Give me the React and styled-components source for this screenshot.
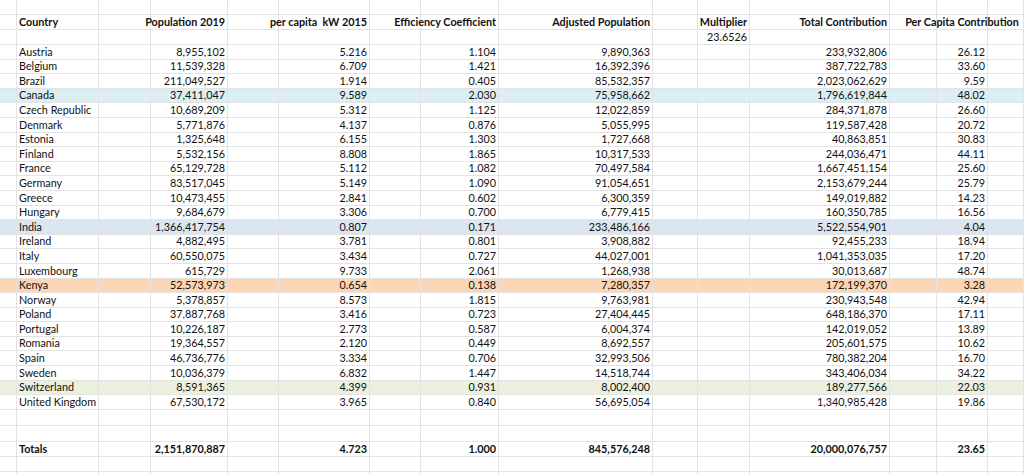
import React from "react";
import styled, { createGlobalStyle } from "styled-components";

const Global = createGlobalStyle`
  html, body { margin: 0; padding: 0; background: #fff; }
  body { font-family: Lato, "Open Sans", sans-serif; color: #111; }
`;

const COLS = "17px 82px 52px 77px 51px 91px 51px 78px 154px 45px 52px 140px 47px 51px 36px";

const Sheet = styled.div`
  display: grid;
  grid-template-columns: ${COLS};
  width: 1024px;
  height: 474px;
  overflow: hidden;
`;

const Row = styled.div`
  display: contents;
`;

const Cell = styled.div`
  height: ${(p) => p.$h || 14.6}px;
  box-sizing: border-box;
  border-right: 1px solid #e3e3e3;
  border-bottom: 1px solid #e3e3e3;
  background: ${(p) => p.$bg || "#fff"};
  font-size: 10.8px;
  line-height: 15px;
  font-weight: ${(p) => (p.$bold ? 700 : 400)};
  padding: 0 2px;
  white-space: pre;
  position: relative;
  display: flex;
  align-items: flex-end;
  justify-content: ${(p) => (p.$align === "right" ? "flex-end" : p.$align === "center" ? "center" : "flex-start")};
  z-index: ${(p) => (p.$over ? 1 : 0)};
`;

const data = [
  ["Austria", "8,955,102", "5.216", "1.104", "9,890,363", "233,932,806", "26.12"],
  ["Belgium", "11,539,328", "6.709", "1.421", "16,392,396", "387,722,783", "33.60"],
  ["Brazil", "211,049,527", "1.914", "0.405", "85,532,357", "2,023,062,629", "9.59"],
  ["Canada", "37,411,047", "9.589", "2.030", "75,958,662", "1,796,619,844", "48.02", "#daeef3"],
  ["Czech Republic", "10,689,209", "5.312", "1.125", "12,022,859", "284,371,878", "26.60"],
  ["Denmark", "5,771,876", "4.137", "0.876", "5,055,995", "119,587,428", "20.72"],
  ["Estonia", "1,325,648", "6.155", "1.303", "1,727,668", "40,863,851", "30.83"],
  ["Finland", "5,532,156", "8.808", "1.865", "10,317,533", "244,036,471", "44.11"],
  ["France", "65,129,728", "5.112", "1.082", "70,497,584", "1,667,451,154", "25.60"],
  ["Germany", "83,517,045", "5.149", "1.090", "91,054,651", "2,153,679,244", "25.79"],
  ["Greece", "10,473,455", "2.841", "0.602", "6,300,359", "149,019,882", "14.23"],
  ["Hungary", "9,684,679", "3.306", "0.700", "6,779,415", "160,350,785", "16.56"],
  ["India", "1,366,417,754", "0.807", "0.171", "233,486,166", "5,522,554,901", "4.04", "#dce6f1"],
  ["Ireland", "4,882,495", "3.781", "0.801", "3,908,882", "92,455,233", "18.94"],
  ["Italy", "60,550,075", "3.434", "0.727", "44,027,001", "1,041,353,035", "17.20"],
  ["Luxembourg", "615,729", "9.733", "2.061", "1,268,938", "30,013,687", "48.74"],
  ["Kenya", "52,573,973", "0.654", "0.138", "7,280,357", "172,199,370", "3.28", "#fcd5b4"],
  ["Norway", "5,378,857", "8.573", "1.815", "9,763,981", "230,943,548", "42.94"],
  ["Poland", "37,887,768", "3.416", "0.723", "27,404,445", "648,186,370", "17.11"],
  ["Portugal", "10,226,187", "2.773", "0.587", "6,004,374", "142,019,052", "13.89"],
  ["Romania", "19,364,557", "2.120", "0.449", "8,692,557", "205,601,575", "10.62"],
  ["Spain", "46,736,776", "3.334", "0.706", "32,993,506", "780,382,204", "16.70"],
  ["Sweden", "10,036,379", "6.832", "1.447", "14,518,744", "343,406,034", "34.22"],
  ["Switzerland", "8,591,365", "4.399", "0.931", "8,002,400", "189,277,566", "22.03", "#ebf1de"],
  ["United Kingdom", "67,530,172", "3.965", "0.840", "56,695,054", "1,340,985,428", "19.86"],
];

function makeRow(vals, opts = {}) {
  const cells = Array(15).fill(null).map(() => ({ text: "", align: "left" }));
  Object.entries(vals).forEach(([k, v]) => {
    cells[k] = v;
  });
  return { cells, ...opts };
}

const R = (t) => ({ text: t, align: "right" });
const L = (t) => ({ text: t, align: "left" });

const rows = [];
rows.push(makeRow({}, { h: 15 }));
rows.push(
  makeRow(
    {
      1: L("Country"),
      3: R("Population 2019"),
      5: R("per capita  kW 2015"),
      7: R("Efficiency Coefficient"),
      8: R("Adjusted Population"),
      10: R("Multiplier"),
      11: R("Total Contribution"),
      13: { text: "Per Capita Contribution", align: "center" },
    },
    { bold: true, h: 15 }
  )
);
rows.push(makeRow({ 10: R("23.6526") }, { h: 15 }));
data.forEach((d) =>
  rows.push(
    makeRow(
      { 1: L(d[0]), 3: R(d[1]), 5: R(d[2]), 7: R(d[3]), 8: R(d[4]), 11: R(d[5]), 13: R(d[6]) },
      { bg: d[7] }
    )
  )
);
rows.push(makeRow({}, { h: 16 }));
rows.push(makeRow({}, { h: 16 }));
rows.push(
  makeRow(
    {
      1: L("Totals"),
      3: R("2,151,870,887"),
      5: R("4.723"),
      7: R("1.000"),
      8: R("845,576,248"),
      11: R("20,000,076,757"),
      13: R("23.65"),
    },
    { bold: true, h: 15.5 }
  )
);
for (let i = 0; i < 4; i++) rows.push(makeRow({}));

export default function App() {
  return (
    <>
      <Global />
      <Sheet>
        {rows.map((r, i) => (
          <Row key={i}>
            {r.cells.map((c, j) => (
              <Cell key={j} $h={r.h} $bg={r.bg} $bold={r.bold} $align={c.align} $over={!!c.text}>
                {c.text}
              </Cell>
            ))}
          </Row>
        ))}
      </Sheet>
    </>
  );
}
